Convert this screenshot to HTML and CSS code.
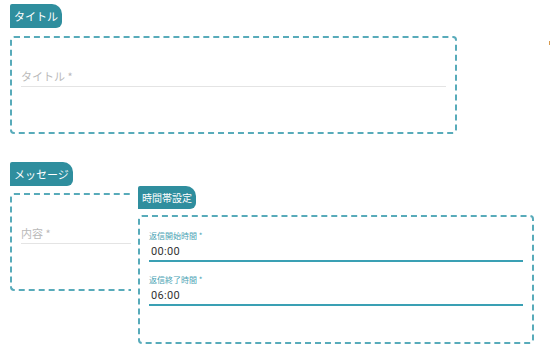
FILE: index.html
```html
<!DOCTYPE html>
<html lang="ja">
<head>
  <meta charset="UTF-8">
  <title>自動返信設定</title>
  <meta name="viewport" content="width=device-width, initial-scale=1.0">
  <link rel="stylesheet" href="styles.css">
</head>
<body>

<div class="page">
  <section class="group">
    <div class="tag">タイトル</div>
    <div class="box box-title">
      <div class="field"><span class="placeholder">タイトル *</span></div>
    </div>
  </section>

  <div class="msg-row">
    <section class="group msg">
      <div class="tag tag-gap">メッセージ</div>
      <div class="box box-msg">
        <div class="field"><span class="placeholder">内容 *</span></div>
      </div>
    </section>

    <section class="group time">
      <div class="tag tag-sm">時間帯設定</div>
      <div class="box box-time">
        <div class="tfield">
          <label>返信開始時間 *</label>
          <div class="val">00:00</div>
        </div>
        <div class="tfield">
          <label>返信終了時間 *</label>
          <div class="val">06:00</div>
        </div>
      </div>
    </section>
  </div>
</div>

<span class="edge-mark"></span>

</body>
</html>
```

FILE: styles.css
```css
body { margin: 0; font-family: Roboto, "Noto Sans CJK JP", sans-serif; background: #fff; }
.page { padding: 4px 10px 0 10px; }

.tag {
  display: inline-block; background: #2f8e9e; color: #fff;
  font-family: "Noto Sans CJK JP", sans-serif; font-size: 11px;
  line-height: 24px; height: 24px; padding: 0 4px;
  border-radius: 2px 10px 6px 0;
}
.tag-sm { font-size: 10px; line-height: 23px; height: 23px; }
.group { display: flex; flex-direction: column; align-items: flex-start; }

.box {
  border: 2px dashed #58abba; border-radius: 4px; box-sizing: border-box;
  background: #fff;
}
.box-title { width: 447px; height: 98px; margin-top: 8px; padding: 28px 9px 0 9px; }
.field { border-bottom: 1.5px solid #e4e4e4; padding-bottom: 1px; }
.placeholder { font-size: 11px; line-height: 16px; color: #b9b9b9; font-family: "Noto Sans CJK JP", sans-serif; }

.msg-row { display: flex; align-items: flex-start; margin-top: 28px; }
.msg { width: 121px; }
.box-msg {
  width: 121px; height: 98px; margin-top: 7px; padding: 28px 0 0 9px;
  border-right: none; border-radius: 4px 0 0 4px;
}

.time { margin-left: 7px; margin-top: 24px; }
.box-time { width: 396px; height: 129px; margin-top: 6px; padding: 13px 9px 0 9px; }
.tfield { border-bottom: 2px solid #3aa0b4; margin-bottom: 12px; }
.tfield label {
  display: block; font-size: 8px; line-height: 11px; color: #4aa3b4;
  font-family: "Noto Sans CJK JP", sans-serif;
}
.val { font-size: 11px; line-height: 15px; color: #333; padding: 3px 0 1px 2px; letter-spacing: 0.3px; }

.edge-mark { position: absolute; left: 549px; top: 41px; width: 1px; height: 4px; background: #d79a4e; }
```
